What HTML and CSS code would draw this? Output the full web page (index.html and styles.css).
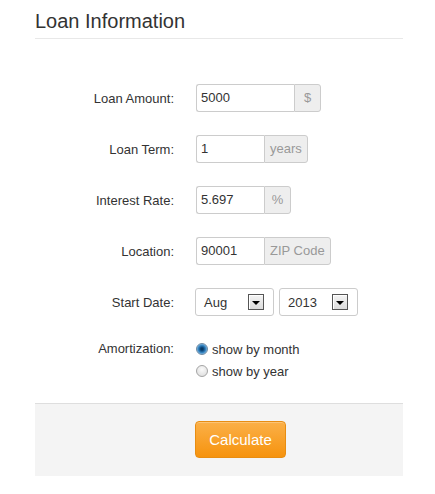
FILE: index.html
```html
<!DOCTYPE html>
<html>
<head>
<meta charset="utf-8">
<link rel="stylesheet" href="styles.css">
</head>
<body>
<div class="panel">
  <h2 class="title">Loan Information</h2>
  <div class="form">
    <div class="row">
      <span class="label">Loan Amount:</span>
      <div class="group">
        <span class="input wide">5000</span><span class="addon">$</span>
      </div>
    </div>
    <div class="row">
      <span class="label">Loan Term:</span>
      <div class="group">
        <span class="input">1</span><span class="addon">years</span>
      </div>
    </div>
    <div class="row">
      <span class="label">Interest Rate:</span>
      <div class="group">
        <span class="input">5.697</span><span class="addon">%</span>
      </div>
    </div>
    <div class="row">
      <span class="label">Location:</span>
      <div class="group">
        <span class="input">90001</span><span class="addon">ZIP Code</span>
      </div>
    </div>
    <div class="row">
      <span class="label">Start Date:</span>
      <div class="selects">
        <div class="select"><span>Aug</span><span class="arrow"></span></div>
        <div class="select"><span>2013</span><span class="arrow"></span></div>
      </div>
    </div>
    <div class="row radios-row">
      <span class="label">Amortization:</span>
      <div class="radios">
        <label class="radio"><span class="dot checked"></span>show by month</label>
        <label class="radio"><span class="dot"></span>show by year</label>
      </div>
    </div>
  </div>
  <div class="footer">
    <button class="btn">Calculate</button>
  </div>
</div>
</body>
</html>
```
FILE: styles.css
```css
html, body {
  margin: 0;
  padding: 0;
  background: #fff;
}
body {
  font-family: "Liberation Sans", Arial, sans-serif;
  color: #333;
}
.panel {
  width: 368px;
  margin-left: 35px;
}
.title {
  margin: 0;
  padding-top: 9px;
  padding-bottom: 5px;
  font-size: 20px;
  line-height: 24px;
  font-weight: normal;
  color: #333;
  border-bottom: 1px solid #e8e8e8;
}
.form {
  margin-top: 45px;
  display: flex;
  flex-direction: column;
  gap: 23px;
}
.row {
  display: grid;
  grid-template-columns: 139px 1fr;
  column-gap: 22px;
  align-items: center;
  height: 28px;
}
.label {
  font-size: 13px;
  text-align: right;
  color: #333;
  padding-top: 1px;
}
.group {
  display: flex;
  height: 28px;
}
.input {
  box-sizing: border-box;
  width: 68px;
  height: 28px;
  border: 1px solid #ccc;
  border-right: none;
  border-radius: 3px 0 0 3px;
  padding: 0 4px;
  font-size: 13px;
  line-height: 26px;
  color: #333;
  background: #fff;
}
.input.wide {
  width: 98px;
}
.addon {
  box-sizing: border-box;
  min-width: 27px;
  height: 28px;
  padding: 0 5px;
  border: 1px solid #ccc;
  border-radius: 0 3px 3px 0;
  background: #eee;
  color: #999;
  font-size: 13px;
  line-height: 26px;
  text-align: center;
}
.selects {
  display: flex;
  gap: 5px;
  margin-left: -1px;
}
.select {
  box-sizing: border-box;
  width: 79px;
  height: 28px;
  border: 1px solid #ccc;
  border-radius: 3px;
  background: #fff;
  display: flex;
  align-items: center;
  justify-content: space-between;
  padding: 0 9px 0 8px;
  font-size: 13px;
  color: #333;
}
.arrow {
  box-sizing: border-box;
  width: 16px;
  height: 16px;
  border: 1px solid #555;
  background: linear-gradient(#f4f4f4, #dcdcdc);
  box-shadow: inset 1px 1px 0 #fff;
  display: flex;
  align-items: center;
  justify-content: center;
}
.arrow::after {
  content: "";
  width: 0;
  height: 0;
  border-left: 4px solid transparent;
  border-right: 4px solid transparent;
  border-top: 4px solid #000;
  margin-top: 1px;
}
.radios-row {
  height: auto;
  align-items: start;
  margin-top: -1px;
}
.radios-row .label {
  line-height: 22px;
  padding-top: 0;
}
.radios {
  display: flex;
  flex-direction: column;
}
.radio {
  display: flex;
  align-items: center;
  gap: 4px;
  height: 22px;
  font-size: 13px;
  color: #333;
}
.dot {
  box-sizing: border-box;
  width: 12px;
  height: 12px;
  border-radius: 50%;
  border: 1px solid #a4a4a4;
  background: radial-gradient(circle at 50% 35%, #fafafa, #dadada);
}
.dot.checked {
  border-color: #6d8aa3;
  background: radial-gradient(circle at 50% 50%, #062c4f 0, #0d4a7f 25%, #3b8cc9 55%, #bcd8ee 85%);
}
.footer {
  margin-top: 21px;
  border-top: 1px solid #dedede;
  background: #f4f4f4;
  padding: 17px 0 18px 160px;
}
.btn {
  display: block;
  width: 91px;
  height: 37px;
  border: 1px solid #e88d12;
  border-radius: 4px;
  background: linear-gradient(#fbb048, #f6930e);
  color: #fff;
  font-family: "Liberation Sans", Arial, sans-serif;
  font-size: 15px;
  padding: 0;
  box-shadow: inset 0 1px 0 rgba(255,255,255,0.25);
}
```
